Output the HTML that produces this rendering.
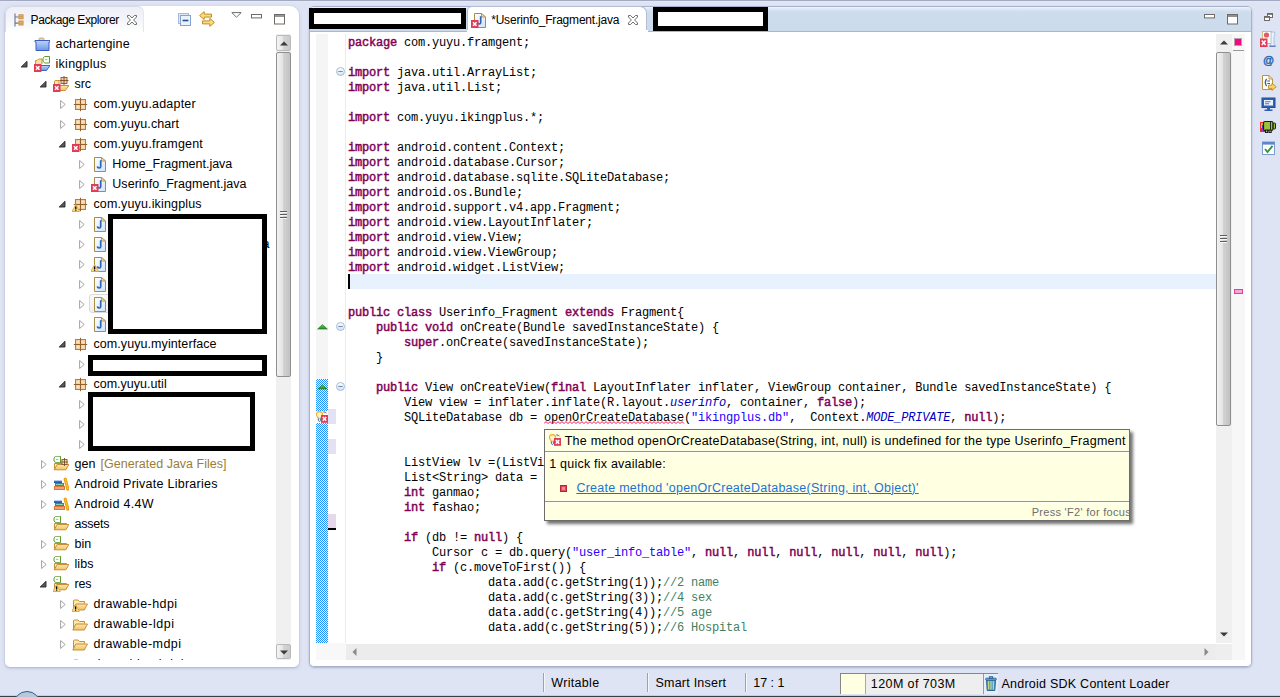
<!DOCTYPE html>
<html><head><meta charset="utf-8"><title>Eclipse</title>
<style>
html,body{margin:0;padding:0}
body{width:1280px;height:697px;overflow:hidden;position:relative;background:#dfe4f4;font-family:"Liberation Sans",sans-serif;font-size:12.5px;color:#000}
.abs{position:absolute}
.t{position:absolute;white-space:pre;line-height:18px;height:18px;margin-top:1px}
.topstrip{position:absolute;left:0;top:0;width:1280px;height:2px;background:linear-gradient(#a3a9be 0 50%,#e3e7f6 50%)}
.botstrip{position:absolute;left:0;top:695px;width:1280px;height:2px;background:linear-gradient(#c9cede 0 40%,#3a404a 50%)}
/* left panel */
#lp{position:absolute;left:5px;top:6px;width:294px;height:661px;background:#fff;border-radius:8px 9px 5px 5px;box-shadow:0 1px 3px rgba(110,120,165,.5)}
#lptab{position:absolute;left:0;top:0;width:139px;height:26px;border-radius:7px 7px 0 0;background:linear-gradient(#eef0f7,#f4f5fa 55%,#fff);box-shadow:inset 1px 1px 0 #d6dae8, inset -1px 0 0 #e4e6f0}
#tree{position:absolute;left:0;top:27px;width:271px;height:627px;overflow:hidden}
/* editor */
#ed{position:absolute;left:309px;top:6px;width:943px;height:661px;background:#fff;border-radius:5px;box-shadow:0 0 0 1px #a9b2cc inset, 0 1px 2px rgba(120,130,170,.5);overflow:hidden}
#edtabs{position:absolute;left:1px;top:0;width:941px;height:24px;background:linear-gradient(#eef4fc,#dde8f4 2px,#cddded 5px,#cbdbeb);border-radius:4px 4px 0 0}
.code{position:absolute;left:39px;white-space:pre;font-family:"Liberation Mono",monospace;font-size:12px;letter-spacing:-0.2px;line-height:15px;height:15px;color:#000}
.k{color:#7f0055;-webkit-text-stroke:0.45px #7f0055}
.s{color:#2a00ff}
.f{color:#0000c0;font-style:italic}
.c{color:#3f7f5f}
.blk{position:absolute;background:#fff;border:5px solid #000;box-sizing:border-box}
#edin{position:absolute;left:0;top:1px;width:943px;height:660px}

</style></head>
<body>
<svg width="0" height="0" style="position:absolute"><defs>
<linearGradient id="gBlue" x1="0" y1="0" x2="0" y2="1"><stop offset="0" stop-color="#bcd6fb"/><stop offset="1" stop-color="#6a97e6"/></linearGradient>
<linearGradient id="gFold" x1="0" y1="0" x2="0" y2="1"><stop offset="0" stop-color="#fbe7b0"/><stop offset="1" stop-color="#f0c266"/></linearGradient>
<linearGradient id="gPage" x1="0" y1="0" x2="1" y2="1"><stop offset="0" stop-color="#ffffff"/><stop offset="1" stop-color="#d3e2f6"/></linearGradient>
<linearGradient id="gCirc" x1="0" y1="0" x2="0" y2="1"><stop offset="0" stop-color="#ffffff"/><stop offset="1" stop-color="#d5e2f2"/></linearGradient>
<linearGradient id="gGreen" x1="0" y1="0" x2="0" y2="1"><stop offset="0" stop-color="#6cc86c"/><stop offset="1" stop-color="#1f8a1f"/></linearGradient>
<linearGradient id="gBtn" x1="0" y1="0" x2="1" y2="0"><stop offset="0" stop-color="#f4f4f4"/><stop offset=".45" stop-color="#e6e6e6"/><stop offset=".5" stop-color="#d4d4d4"/><stop offset="1" stop-color="#c4c4c6"/></linearGradient>
</defs><symbol id="prjc" viewBox="0 0 16 16"><rect x="5" y="2" width="5" height="3" rx="1" fill="#ecd2b0" stroke="#c89a6a" stroke-width=".8"/><path d="M1,4.5 H16 V6 H15 V14.5 H2 V6 H1 Z" fill="url(#gBlue)" stroke="#3c5cc4" stroke-linejoin="round"/></symbol><symbol id="prjo" viewBox="0 0 16 16"><path d="M1.5,11 V4.5 H3 L4.5,3 H8 V8" fill="#f8e0a0" stroke="#c89a48"/><path d="M3.5,9.5 H16 L12.5,14.5 H1 Z" fill="url(#gBlue)" stroke="#4462c6" stroke-linejoin="round"/><g transform="translate(7.5,-0.5)"><path d="M3.2,1 H8 V7.5 H3.4 L1.5,5.8 V2.6 Z" fill="#fff" stroke="#5c9c2c" stroke-width="1" stroke-linejoin="round"/><path d="M3.4,4.2 H5.8" stroke="#d8a860" stroke-width="1"/></g><rect x="0" y="8" width="7.5" height="8" fill="#e13c56"/><path d="M2,10.2 L5.5,13.8 M5.5,10.2 L2,13.8" stroke="#fff" stroke-width="1.5" fill="none"/></symbol><symbol id="srcerr" viewBox="0 0 16 16"><path d="M1.5,12 V5.5 Q1.5,4.5 3,4.5 H6 V9" fill="#fbe9b8" stroke="#c98f35"/><path d="M3.8,9.5 H16 L12.3,14.5 H0.8 Z" fill="url(#gFold)" stroke="#c98f35" stroke-linejoin="round"/><g transform="translate(-1,-1.5)"><rect x="9" y="3" width="6" height="6" fill="#f0d0a0" stroke="#8a5a2c" stroke-width=".9"/><path d="M12,1.5 V10.5 M7.5,6 H16.5" stroke="#7a4a22" stroke-width=".9"/></g><rect x="0" y="8" width="7.5" height="8" fill="#e13c56"/><path d="M2,10.2 L5.5,13.8 M5.5,10.2 L2,13.8" stroke="#fff" stroke-width="1.5" fill="none"/></symbol><symbol id="pkg" viewBox="0 0 16 16"><rect x="3.5" y="3.5" width="10" height="10" fill="#f0cf9c" stroke="#c17b2b"/><rect x="4.8" y="4.8" width="2.6" height="2.6" fill="#f7e2bc"/><rect x="9.6" y="4.8" width="2.6" height="2.6" fill="#f7e2bc"/><rect x="4.8" y="9.6" width="2.6" height="2.6" fill="#f7e2bc"/><rect x="9.6" y="9.6" width="2.6" height="2.6" fill="#f7e2bc"/><path d="M8.5,1.8 V15.2 M1.8,8.5 H15.2" stroke="#93602f" stroke-width="1"/></symbol><symbol id="pkgerr" viewBox="0 0 16 16"><rect x="3.5" y="3.5" width="10" height="10" fill="#f0cf9c" stroke="#c17b2b"/><rect x="4.8" y="4.8" width="2.6" height="2.6" fill="#f7e2bc"/><rect x="9.6" y="4.8" width="2.6" height="2.6" fill="#f7e2bc"/><rect x="4.8" y="9.6" width="2.6" height="2.6" fill="#f7e2bc"/><rect x="9.6" y="9.6" width="2.6" height="2.6" fill="#f7e2bc"/><path d="M8.5,1.8 V15.2 M1.8,8.5 H15.2" stroke="#93602f" stroke-width="1"/><rect x="0" y="8" width="7.5" height="8" fill="#e13c56"/><path d="M2,10.2 L5.5,13.8 M5.5,10.2 L2,13.8" stroke="#fff" stroke-width="1.5" fill="none"/></symbol><symbol id="pkgwarn" viewBox="0 0 16 16"><rect x="3.5" y="3.5" width="10" height="10" fill="#f0cf9c" stroke="#c17b2b"/><rect x="4.8" y="4.8" width="2.6" height="2.6" fill="#f7e2bc"/><rect x="9.6" y="4.8" width="2.6" height="2.6" fill="#f7e2bc"/><rect x="4.8" y="9.6" width="2.6" height="2.6" fill="#f7e2bc"/><rect x="9.6" y="9.6" width="2.6" height="2.6" fill="#f7e2bc"/><path d="M8.5,1.8 V15.2 M1.8,8.5 H15.2" stroke="#93602f" stroke-width="1"/><g transform="translate(0.2,0)"><path d="M3.6,8.4 L7.4,15.5 H-0.2 Z" fill="#fcdc88" stroke="#dfa63a" stroke-width=".9" stroke-linejoin="round"/><path d="M3.6,10.4 V13" stroke="#000" stroke-width="1.3"/><rect x="2.95" y="13.5" width="1.3" height="1.2" fill="#000"/></g></symbol><symbol id="jf" viewBox="0 0 16 16"><path d="M3.5,1.5 H10.5 L14.5,5 V15.5 H3.5 Z" fill="url(#gPage)" stroke="#a98c45" stroke-linejoin="round"/><path d="M10.5,1.5 V5 H14.5 Z" fill="#f3e4b8" stroke="#a98c45" stroke-width=".8" stroke-linejoin="round"/><path d="M9.7,5.2 V10.4 Q9.7,12 8.2,12 Q7.1,12 6.7,11.2" fill="none" stroke="#2c63b4" stroke-width="1.7" stroke-linecap="square"/></symbol><symbol id="jferr" viewBox="0 0 16 16"><path d="M3.5,1.5 H10.5 L14.5,5 V15.5 H3.5 Z" fill="url(#gPage)" stroke="#a98c45" stroke-linejoin="round"/><path d="M10.5,1.5 V5 H14.5 Z" fill="#f3e4b8" stroke="#a98c45" stroke-width=".8" stroke-linejoin="round"/><path d="M9.7,5.2 V10.4 Q9.7,12 8.2,12 Q7.1,12 6.7,11.2" fill="none" stroke="#2c63b4" stroke-width="1.7" stroke-linecap="square"/><rect x="0" y="8" width="7.5" height="8" fill="#e13c56"/><path d="M2,10.2 L5.5,13.8 M5.5,10.2 L2,13.8" stroke="#fff" stroke-width="1.5" fill="none"/></symbol><symbol id="jfwarn" viewBox="0 0 16 16"><path d="M3.5,1.5 H10.5 L14.5,5 V15.5 H3.5 Z" fill="url(#gPage)" stroke="#a98c45" stroke-linejoin="round"/><path d="M10.5,1.5 V5 H14.5 Z" fill="#f3e4b8" stroke="#a98c45" stroke-width=".8" stroke-linejoin="round"/><path d="M9.7,5.2 V10.4 Q9.7,12 8.2,12 Q7.1,12 6.7,11.2" fill="none" stroke="#2c63b4" stroke-width="1.7" stroke-linecap="square"/><path d="M3.6,8.4 L7.4,15.5 H-0.2 Z" fill="#fcdc88" stroke="#dfa63a" stroke-width=".9" stroke-linejoin="round"/><path d="M3.6,10.4 V13" stroke="#000" stroke-width="1.3"/><rect x="2.95" y="13.5" width="1.3" height="1.2" fill="#000"/></symbol><symbol id="gen" viewBox="0 0 16 16"><path d="M1.5,13.5 V7.5 H13.5 V8.5" fill="#fbe9b8" stroke="#c98f35"/><path d="M4.2,8.5 H15.8 L12.8,13.8 H1.2 Z" fill="url(#gFold)" stroke="#c98f35" stroke-linejoin="round"/><g transform="translate(-0.5,-0.8)"><path d="M3.2,1 H8 V7.5 H3.4 L1.5,5.8 V2.6 Z" fill="#fff" stroke="#5c9c2c" stroke-width="1" stroke-linejoin="round"/><path d="M3.4,4.2 H5.8" stroke="#d8a860" stroke-width="1"/></g><g transform="translate(-1,0.5)"><rect x="10" y="3" width="5" height="5" fill="#f4e2b4" stroke="#8a5a2c" stroke-width=".9"/><path d="M12.5,1.5 V9.5 M8.5,5.5 H16" stroke="#7a4a22" stroke-width=".9"/></g></symbol><symbol id="fldd" viewBox="0 0 16 16"><path d="M1.5,13.5 V7.5 H13.5 V8.5" fill="#fbe9b8" stroke="#c98f35"/><path d="M4.2,8.5 H15.8 L12.8,13.8 H1.2 Z" fill="url(#gFold)" stroke="#c98f35" stroke-linejoin="round"/><g transform="translate(-0.5,-0.8)"><path d="M3.2,1 H8 V7.5 H3.4 L1.5,5.8 V2.6 Z" fill="#fff" stroke="#5c9c2c" stroke-width="1" stroke-linejoin="round"/><path d="M3.4,4.2 H5.8" stroke="#d8a860" stroke-width="1"/></g></symbol><symbol id="flddwarn" viewBox="0 0 16 16"><path d="M1.5,13.5 V7.5 H13.5 V8.5" fill="#fbe9b8" stroke="#c98f35"/><path d="M4.2,8.5 H15.8 L12.8,13.8 H1.2 Z" fill="url(#gFold)" stroke="#c98f35" stroke-linejoin="round"/><g transform="translate(-0.5,-0.8)"><path d="M3.2,1 H8 V7.5 H3.4 L1.5,5.8 V2.6 Z" fill="#fff" stroke="#5c9c2c" stroke-width="1" stroke-linejoin="round"/><path d="M3.4,4.2 H5.8" stroke="#d8a860" stroke-width="1"/></g><path d="M3.6,8.4 L7.4,15.5 H-0.2 Z" fill="#fcdc88" stroke="#dfa63a" stroke-width=".9" stroke-linejoin="round"/><path d="M3.6,10.4 V13" stroke="#000" stroke-width="1.3"/><rect x="2.95" y="13.5" width="1.3" height="1.2" fill="#000"/></symbol><symbol id="fld" viewBox="0 0 16 16"><g transform="translate(0,.5)"><path d="M1.5,12.5 V4.5 Q1.5,3.5 2.5,3.5 H6 L7.5,5 H12.5 V7" fill="#fbe9b8" stroke="#c98f35"/><path d="M3.8,7.5 H15.5 L12.3,13.5 H0.8 Z" fill="url(#gFold)" stroke="#c98f35" stroke-linejoin="round"/></g></symbol><symbol id="fldwarn" viewBox="0 0 16 16"><g transform="translate(0,.5)"><path d="M1.5,12.5 V4.5 Q1.5,3.5 2.5,3.5 H6 L7.5,5 H12.5 V7" fill="#fbe9b8" stroke="#c98f35"/><path d="M3.8,7.5 H15.5 L12.3,13.5 H0.8 Z" fill="url(#gFold)" stroke="#c98f35" stroke-linejoin="round"/></g><path d="M3.6,8.4 L7.4,15.5 H-0.2 Z" fill="#fcdc88" stroke="#dfa63a" stroke-width=".9" stroke-linejoin="round"/><path d="M3.6,10.4 V13" stroke="#000" stroke-width="1.3"/><rect x="2.95" y="13.5" width="1.3" height="1.2" fill="#000"/></symbol><symbol id="lib" viewBox="0 0 16 16"><rect x="1" y="4.8" width="8" height="2.2" fill="#1f5cb4"/><rect x="1" y="4.8" width="8" height=".8" fill="#4a86d8"/><rect x="2" y="7" width="9" height="3" fill="#2b9a62"/><rect x="3" y="8" width="7" height="1" fill="#8fd0a8"/><rect x="1" y="10" width="11" height="4" fill="#d8763c"/><rect x="2" y="11" width="9" height="2" fill="#e9a478"/><path d="M12.2,3.2 L14.8,13" stroke="#e9a00c" stroke-width="3.2" stroke-linecap="round"/><path d="M12.3,3.4 L14.7,12.6" stroke="#f8c838" stroke-width="1.2" stroke-linecap="round" stroke-dasharray="1.6 1.2"/></symbol><symbol id="arc" viewBox="0 0 6 9"><path d="M0.6,0.5 V8.5 L5.2,4.5 Z" fill="#fff" stroke="#a3a3a3" stroke-width="1" stroke-linejoin="round"/></symbol><symbol id="aro" viewBox="0 0 7 7"><path d="M6,0.3 V6 H0.2 Z" fill="#595959" stroke="#262626" stroke-width=".9" stroke-linejoin="round"/></symbol><symbol id="pkgexp" viewBox="0 0 16 16"><path d="M5,2.6 V15.4 M5,6 H8.5 M5,12.1 H8.5" stroke="#68748c" stroke-width="1.1" fill="none"/><rect x="8.5" y="3.4" width="5" height="4.8" fill="#c47a2c"/><rect x="9.5" y="4.3" width="1.2" height="1.2" fill="#fbe6b0"/><rect x="11.4" y="4.3" width="1.2" height="1.2" fill="#fbe6b0"/><rect x="9.5" y="6.199999999999999" width="1.2" height="1.2" fill="#fbe6b0"/><rect x="11.4" y="6.199999999999999" width="1.2" height="1.2" fill="#fbe6b0"/><rect x="8.5" y="9.6" width="5" height="4.8" fill="#c47a2c"/><rect x="9.5" y="10.5" width="1.2" height="1.2" fill="#fbe6b0"/><rect x="11.4" y="10.5" width="1.2" height="1.2" fill="#fbe6b0"/><rect x="9.5" y="12.399999999999999" width="1.2" height="1.2" fill="#fbe6b0"/><rect x="11.4" y="12.399999999999999" width="1.2" height="1.2" fill="#fbe6b0"/></symbol><symbol id="closex" viewBox="0 0 12 12"><path d="M1.5,1.5 L3.6,1.5 L6,4 L8.4,1.5 L10.5,1.5 L10.5,3 L7.6,6 L10.5,9 L10.5,10.5 L8.4,10.5 L6,8 L3.6,10.5 L1.5,10.5 L1.5,9 L4.4,6 L1.5,3 Z" fill="#fff" stroke="#6f6f6f" stroke-width="1" stroke-linejoin="round"/></symbol><symbol id="collapse" viewBox="0 0 13 13"><rect x="0.5" y="0.5" width="10" height="10" fill="#dde8f7" stroke="#a6bbdb"/><rect x="2.5" y="2.5" width="10" height="10" fill="#eaf2fc" stroke="#86a2cc"/><path d="M4.6,7.5 H10.4" stroke="#1f4ea0" stroke-width="1.6"/></symbol><symbol id="linked" viewBox="0 0 16 16"><path d="M0.6,4.6 L5.2,0.6 V3.1 H12.5 V6.1 H5.2 V8.6 Z" fill="#f9dc80" stroke="#c48c24" stroke-linejoin="round"/><path d="M15.4,11.4 L10.8,7.4 V9.9 H3.5 V12.9 H10.8 V15.4 Z" fill="#f9dc80" stroke="#c48c24" stroke-linejoin="round"/></symbol><symbol id="vmenu" viewBox="0 0 11 6"><path d="M0.8,0.6 H10.2 L5.5,5.2 Z" fill="#fff" stroke="#6e6e6e" stroke-linejoin="round"/></symbol><symbol id="minb" viewBox="0 0 11 5"><rect x="0.5" y="0.5" width="10" height="3.4" fill="#fff" stroke="#6e6a68"/></symbol><symbol id="maxb" viewBox="0 0 11 11"><rect x="0.5" y="0.5" width="10" height="9.5" fill="#fff" stroke="#6e6a68"/><path d="M0.5,2 H10.5" stroke="#6e6a68" stroke-width="1.4"/></symbol><symbol id="foldm" viewBox="0 0 9 9"><circle cx="4.5" cy="4.5" r="4" fill="url(#gCirc)" stroke="#a9bcd4"/><path d="M2.3,4.5 H6.7" stroke="#6f8db8" stroke-width="1.1"/></symbol><symbol id="ovr" viewBox="0 0 11 6"><path d="M5.5,0.5 L10.4,5.1 H0.6 Z" fill="url(#gGreen)" stroke="#1c7a1c" stroke-width=".6" stroke-linejoin="round"/></symbol><symbol id="bulberr" viewBox="0 0 12 12"><path d="M3.5,0.6 Q6.6,0.6 6.6,3.4 Q6.6,4.6 5.4,5.8 L4.6,7.4 H2.4 L1.6,5.8 Q0.4,4.6 0.4,3.4 Q0.4,0.6 3.5,0.6 Z" fill="#fdf3c4" stroke="#eeaa32" stroke-width="1.1"/><path d="M2.3,7.4 V9.6 Q3.5,11.6 4.7,9.6 V7.4" fill="#dfe8f4" stroke="#3c68ac" stroke-width="1"/><path d="M7.2,0.9 Q9.6,0.4 10.6,2.4 M8.6,2.2 L9.3,1.2" stroke="#555" stroke-width=".8" fill="none"/><rect x="5" y="4" width="7" height="7.8" fill="#e13c56"/><path d="M6.8,6 L10.2,9.8 M10.2,6 L6.8,9.8" stroke="#fff" stroke-width="1.5"/></symbol><symbol id="sqred" viewBox="0 0 7 7"><rect x="0.5" y="0.5" width="6" height="6" fill="#e0475c" stroke="#b5283e"/><rect x="2" y="2" width="3" height="3" fill="#ef8a98"/></symbol><symbol id="restore" viewBox="0 0 9 8"><rect x="3.5" y="0.5" width="5" height="4" fill="#fff" stroke="#6e6a68"/><path d="M3.5,1.2 H8.5" stroke="#6e6a68" stroke-width="1.3"/><rect x="0.5" y="3.5" width="5" height="4" fill="#fff" stroke="#6e6a68"/><path d="M0.5,4.2 H5.5" stroke="#6e6a68" stroke-width="1.3"/></symbol><symbol id="probs" viewBox="0 0 16 16"><rect x="2.5" y="0.5" width="9" height="12" fill="#fdfdf8" stroke="#c8b27a" stroke-width=".8"/><circle cx="6.5" cy="4" r="2.6" fill="#e65a62"/><path d="M11,1 H14.5 Q15.5,4 14,6 V13 Q15,14 15.5,15 H9.5 Q10.5,14 11,13 Z" fill="#e8f4fa" stroke="#9ab6d4" stroke-width=".8"/><path d="M9.5,15.2 H15.5" stroke="#3a5aa8" stroke-width="1"/><rect x="0" y="7.5" width="7.5" height="8.5" fill="#e13c56"/><path d="M1.8,9.6 L5.6,14 M5.6,9.6 L1.8,14" stroke="#fff" stroke-width="1.6"/></symbol><symbol id="decl" viewBox="0 0 16 16"><path d="M1.5,0.5 H8 L11.5,4 V14.5 H1.5 Z" fill="#fffdf4" stroke="#b89648" stroke-linejoin="round"/><path d="M8,0.5 V4 H11.5" fill="none" stroke="#b89648"/><path d="M5.6,4 Q3,7.5 5.6,11" fill="none" stroke="#2b5fb0" stroke-width="1.3"/><path d="M6.3,6 H9 M6.3,8.5 H9" stroke="#2b5fb0" stroke-width="1.1"/><path d="M7.5,10.2 H11 V8.2 L15.2,11.8 L11,15.4 V13.4 H7.5 Z" fill="#f8d668" stroke="#c28a22" stroke-width=".9" stroke-linejoin="round"/></symbol><symbol id="cons" viewBox="0 0 16 16"><rect x="1" y="1" width="13" height="9.5" fill="#2f62b4" stroke="#224c94"/><rect x="3" y="3" width="9" height="5.5" fill="#eaf2fc"/><path d="M4,4.7 H9.5 M4,6.8 H8" stroke="#4a76c0" stroke-width="1.1"/><path d="M6,10.5 H9 V12.5 H11.5 V14 H3.5 V12.5 H6 Z" fill="#2f62b4"/></symbol><symbol id="andr" viewBox="0 0 16 13"><path d="M0,2 H3 V12 H0 Z" fill="#e83030"/><path d="M1,3 V12 H4 V3Z" fill="#f0c020"/><path d="M2,5 V12 H5 V5Z" fill="#3050e0"/><path d="M1,8 V12 H4 V8Z" fill="#a030c0"/><rect x="3.5" y="1.5" width="9.5" height="9" rx="1.5" fill="#9ac33a" stroke="#1a1a1a" stroke-width="1.2"/><rect x="13.2" y="3" width="2.3" height="6" rx="1" fill="#9ac33a" stroke="#1a1a1a" stroke-width="1"/><rect x="5.5" y="10" width="2.2" height="2.6" fill="#9ac33a" stroke="#1a1a1a" stroke-width="1"/><rect x="9" y="10" width="2.2" height="2.6" fill="#9ac33a" stroke="#1a1a1a" stroke-width="1"/><path d="M10.5,2 V10" stroke="#1a1a1a" stroke-width=".9"/></symbol><symbol id="tasks" viewBox="0 0 15 15"><rect x="1.5" y="1" width="12" height="12.5" fill="#fdfefe" stroke="#7f9ccc"/><rect x="1.5" y="1" width="12" height="2.6" fill="#5a86cc"/><path d="M4,8 L6.5,11 L11.5,4.8" fill="none" stroke="#2c9a3c" stroke-width="1.9"/></symbol><symbol id="trash" viewBox="0 0 12 15"><path d="M1.5,4 H10.5 L9.8,14.5 H2.2 Z" fill="#4f9cc0" stroke="#2a6a9a" stroke-linejoin="round"/><path d="M3.6,5 V13.5 M6,5 V13.5 M8.4,5 V13.5" stroke="#c4d88a" stroke-width="1.2"/><rect x="0.7" y="2.2" width="10.6" height="2" rx=".8" fill="#6cb4d4" stroke="#2a5a94" stroke-width=".9"/><rect x="4.3" y="0.7" width="3.4" height="1.6" fill="#6cb4d4" stroke="#2a5a94" stroke-width=".8"/></symbol><symbol id="sup" viewBox="0 0 8 5"><path d="M0,4.5 L4,0.5 L8,4.5 Z" fill="#3c3c3c"/></symbol><symbol id="sdn" viewBox="0 0 8 5"><path d="M0,0.5 L4,4.5 L8,0.5 Z" fill="#3c3c3c"/></symbol><symbol id="slf" viewBox="0 0 5 8"><path d="M4.5,0 L0.5,4 L4.5,8 Z" fill="#8a8a8a"/></symbol><symbol id="srt" viewBox="0 0 5 8"><path d="M0.5,0 L4.5,4 L0.5,8 Z" fill="#8a8a8a"/></symbol></svg>
<div class="topstrip"></div>
<div id="lp"><div id="lptab"></div></div>
<svg class="abs" style="left:9.5px;top:10.5px" width="16" height="16"><use href="#pkgexp"/></svg>
<div class="t" style="left:30.6px;top:10px;font-size:12px;letter-spacing:-0.411px;">Package Explorer</div>
<svg class="abs" style="left:126px;top:14px" width="12" height="12"><use href="#closex"/></svg>
<svg class="abs" style="left:178px;top:13px" width="13" height="13"><use href="#collapse"/></svg>
<svg class="abs" style="left:199px;top:11px" width="16" height="16"><use href="#linked"/></svg>
<svg class="abs" style="left:230.5px;top:11.5px" width="11" height="6"><use href="#vmenu"/></svg>
<svg class="abs" style="left:250.5px;top:13.5px" width="11" height="5"><use href="#minb"/></svg>
<svg class="abs" style="left:273.5px;top:13.5px" width="11" height="11"><use href="#maxb"/></svg>
<div class="abs" style="left:276px;top:34px;width:15px;height:626px;background:#f0f0f0"></div>
<div class="abs" style="left:276px;top:35px;width:15px;height:16px;border:1px solid #b9b9b9;border-radius:2px;box-sizing:border-box;background:linear-gradient(90deg,#f4f4f4,#e6e6e6 45%,#d4d4d4 50%,#cacaca)"></div>
<svg class="abs" style="left:279.5px;top:40.5px" width="8" height="5"><use href="#sup"/></svg>
<div class="abs" style="left:276px;top:52px;width:15px;height:325px;border:1px solid #8f8f8f;border-radius:2px;box-sizing:border-box;background:linear-gradient(90deg,#f2f2f2,#e4e4e4 45%,#d2d2d2 50%,#c2c2c4)"></div>
<div class="abs" style="left:280px;top:211px;width:7px;height:8px;background:repeating-linear-gradient(#5e5e5e 0 1px,#f6f6f6 1px 2px,transparent 2px 3px)"></div>
<div class="abs" style="left:276px;top:644px;width:15px;height:15px;border:1px solid #b9b9b9;border-radius:2px;box-sizing:border-box;background:linear-gradient(90deg,#f4f4f4,#e6e6e6 45%,#d4d4d4 50%,#cacaca)"></div>
<svg class="abs" style="left:279.5px;top:649.5px" width="8" height="5"><use href="#sdn"/></svg>
<div class="abs" style="left:0;top:0;width:276px;height:660px;overflow:hidden">
<div class="abs" style="left:89px;top:294px;width:170px;height:19px;border:1px solid #dadada;border-radius:3px;background:linear-gradient(#fafafa,#efefef);box-sizing:border-box"></div>
<svg class="abs" style="left:34px;top:36px" width="16" height="16"><use href="#prjc"/></svg>
<div class="t" style="left:55.6px;top:34px;letter-spacing:0.156px">achartengine</div>
<svg class="abs" style="left:20.6px;top:60.6px" width="7" height="7"><use href="#aro"/></svg>
<svg class="abs" style="left:34px;top:56px" width="16" height="16"><use href="#prjo"/></svg>
<div class="t" style="left:55.6px;top:54px;letter-spacing:0.251px">ikingplus</div>
<svg class="abs" style="left:39.6px;top:80.6px" width="7" height="7"><use href="#aro"/></svg>
<svg class="abs" style="left:53px;top:76px" width="16" height="16"><use href="#srcerr"/></svg>
<div class="t" style="left:74.5px;top:74px;letter-spacing:-0.124px">src</div>
<svg class="abs" style="left:60.1px;top:100.2px" width="6" height="9"><use href="#arc"/></svg>
<svg class="abs" style="left:72px;top:96px" width="16" height="16"><use href="#pkg"/></svg>
<div class="t" style="left:93.4px;top:94px;letter-spacing:0.19px">com.yuyu.adapter</div>
<svg class="abs" style="left:60.1px;top:120.2px" width="6" height="9"><use href="#arc"/></svg>
<svg class="abs" style="left:72px;top:116px" width="16" height="16"><use href="#pkg"/></svg>
<div class="t" style="left:93.4px;top:114px;letter-spacing:0.06px">com.yuyu.chart</div>
<svg class="abs" style="left:58.6px;top:140.6px" width="7" height="7"><use href="#aro"/></svg>
<svg class="abs" style="left:72px;top:136px" width="16" height="16"><use href="#pkgerr"/></svg>
<div class="t" style="left:93.4px;top:134px;letter-spacing:0.194px">com.yuyu.framgent</div>
<svg class="abs" style="left:79.1px;top:160.2px" width="6" height="9"><use href="#arc"/></svg>
<svg class="abs" style="left:91px;top:156px" width="16" height="16"><use href="#jf"/></svg>
<div class="t" style="left:112.3px;top:154px;letter-spacing:-0.011px">Home_Fragment.java</div>
<svg class="abs" style="left:79.1px;top:180.2px" width="6" height="9"><use href="#arc"/></svg>
<svg class="abs" style="left:91px;top:176px" width="16" height="16"><use href="#jferr"/></svg>
<div class="t" style="left:112.3px;top:174px;letter-spacing:0.041px">Userinfo_Fragment.java</div>
<svg class="abs" style="left:58.6px;top:200.6px" width="7" height="7"><use href="#aro"/></svg>
<svg class="abs" style="left:72px;top:196px" width="16" height="16"><use href="#pkgwarn"/></svg>
<div class="t" style="left:93.4px;top:194px;letter-spacing:0.149px">com.yuyu.ikingplus</div>
<svg class="abs" style="left:79.1px;top:220.2px" width="6" height="9"><use href="#arc"/></svg>
<svg class="abs" style="left:91px;top:216px" width="16" height="16"><use href="#jf"/></svg>
<svg class="abs" style="left:79.1px;top:240.2px" width="6" height="9"><use href="#arc"/></svg>
<svg class="abs" style="left:91px;top:236px" width="16" height="16"><use href="#jf"/></svg>
<svg class="abs" style="left:79.1px;top:260.2px" width="6" height="9"><use href="#arc"/></svg>
<svg class="abs" style="left:91px;top:256px" width="16" height="16"><use href="#jfwarn"/></svg>
<svg class="abs" style="left:79.1px;top:280.2px" width="6" height="9"><use href="#arc"/></svg>
<svg class="abs" style="left:91px;top:276px" width="16" height="16"><use href="#jf"/></svg>
<svg class="abs" style="left:79.1px;top:300.2px" width="6" height="9"><use href="#arc"/></svg>
<svg class="abs" style="left:91px;top:296px" width="16" height="16"><use href="#jf"/></svg>
<svg class="abs" style="left:79.1px;top:320.2px" width="6" height="9"><use href="#arc"/></svg>
<svg class="abs" style="left:91px;top:316px" width="16" height="16"><use href="#jf"/></svg>
<svg class="abs" style="left:58.6px;top:340.6px" width="7" height="7"><use href="#aro"/></svg>
<svg class="abs" style="left:72px;top:336px" width="16" height="16"><use href="#pkg"/></svg>
<div class="t" style="left:93.4px;top:334px;letter-spacing:0.081px">com.yuyu.myinterface</div>
<svg class="abs" style="left:79.1px;top:360.2px" width="6" height="9"><use href="#arc"/></svg>
<svg class="abs" style="left:58.6px;top:380.6px" width="7" height="7"><use href="#aro"/></svg>
<svg class="abs" style="left:72px;top:376px" width="16" height="16"><use href="#pkg"/></svg>
<div class="t" style="left:93.4px;top:374px;letter-spacing:0.027px">com.yuyu.util</div>
<svg class="abs" style="left:79.1px;top:400.2px" width="6" height="9"><use href="#arc"/></svg>
<svg class="abs" style="left:79.1px;top:420.2px" width="6" height="9"><use href="#arc"/></svg>
<svg class="abs" style="left:79.1px;top:440.2px" width="6" height="9"><use href="#arc"/></svg>
<svg class="abs" style="left:41.1px;top:460.2px" width="6" height="9"><use href="#arc"/></svg>
<svg class="abs" style="left:53px;top:456px" width="16" height="16"><use href="#gen"/></svg>
<div class="t" style="left:74.5px;top:454px;letter-spacing:0.08px">gen</div>
<div class="t" style="left:100.6px;top:454px;letter-spacing:0.002px;color:#9a7d3a">[Generated Java Files]</div>
<svg class="abs" style="left:41.1px;top:480.2px" width="6" height="9"><use href="#arc"/></svg>
<svg class="abs" style="left:53px;top:476px" width="16" height="16"><use href="#lib"/></svg>
<div class="t" style="left:74.5px;top:474px;letter-spacing:0.253px">Android Private Libraries</div>
<svg class="abs" style="left:41.1px;top:500.2px" width="6" height="9"><use href="#arc"/></svg>
<svg class="abs" style="left:53px;top:496px" width="16" height="16"><use href="#lib"/></svg>
<div class="t" style="left:74.5px;top:494px;letter-spacing:0.297px">Android 4.4W</div>
<svg class="abs" style="left:53px;top:516px" width="16" height="16"><use href="#fldd"/></svg>
<div class="t" style="left:74.5px;top:514px;letter-spacing:-0.207px">assets</div>
<svg class="abs" style="left:41.1px;top:540.2px" width="6" height="9"><use href="#arc"/></svg>
<svg class="abs" style="left:53px;top:536px" width="16" height="16"><use href="#fldd"/></svg>
<div class="t" style="left:74.5px;top:534px;letter-spacing:0.071px">bin</div>
<svg class="abs" style="left:41.1px;top:560.2px" width="6" height="9"><use href="#arc"/></svg>
<svg class="abs" style="left:53px;top:556px" width="16" height="16"><use href="#fldd"/></svg>
<div class="t" style="left:74.5px;top:554px;letter-spacing:0.084px">libs</div>
<svg class="abs" style="left:39.6px;top:580.6px" width="7" height="7"><use href="#aro"/></svg>
<svg class="abs" style="left:53px;top:576px" width="16" height="16"><use href="#flddwarn"/></svg>
<div class="t" style="left:74.5px;top:574px;letter-spacing:-0.158px">res</div>
<svg class="abs" style="left:60.1px;top:600.2px" width="6" height="9"><use href="#arc"/></svg>
<svg class="abs" style="left:72px;top:596px" width="16" height="16"><use href="#fldwarn"/></svg>
<div class="t" style="left:93.4px;top:594px;letter-spacing:0.436px">drawable-hdpi</div>
<svg class="abs" style="left:60.1px;top:620.2px" width="6" height="9"><use href="#arc"/></svg>
<svg class="abs" style="left:72px;top:616px" width="16" height="16"><use href="#fld"/></svg>
<div class="t" style="left:93.4px;top:614px;letter-spacing:0.519px">drawable-ldpi</div>
<svg class="abs" style="left:60.1px;top:640.2px" width="6" height="9"><use href="#arc"/></svg>
<svg class="abs" style="left:72px;top:636px" width="16" height="16"><use href="#fld"/></svg>
<div class="t" style="left:93.4px;top:634px;letter-spacing:0.47px">drawable-mdpi</div>
<svg class="abs" style="left:60.1px;top:660.2px" width="6" height="9"><use href="#arc"/></svg>
<svg class="abs" style="left:72px;top:656px" width="16" height="16"><use href="#fld"/></svg>
<div class="t" style="left:93.4px;top:654px;letter-spacing:0.416px">drawable-xhdpi</div>
<div class="t" style="left:262.5px;top:234px;color:#000">a</div>
<div class="blk" style="left:108px;top:214px;width:159px;height:120px"></div>
<div class="blk" style="left:88px;top:355px;width:179px;height:21px"></div>
<div class="blk" style="left:88px;top:392px;width:167px;height:59px"></div>
</div>
<div id="ed"><div id="edin">
<div id="edtabs"></div>
<div class="abs" style="left:1px;top:24px;width:941px;height:1px;background:#a9b7d0"></div>
<div class="abs" style="left:159px;top:0;width:178px;height:25px;background:#fff;border-radius:4px 6px 0 0;box-shadow:0 0 0 1px #b4bdd3"></div>
<div class="abs" style="left:158px;top:23px;width:181px;height:3px;background:#fff"></div>
<svg class="abs" style="left:162px;top:5px" width="16" height="16"><use href="#jferr"/></svg>
<div class="t" style="left:182.2px;top:3px;font-size:12px;letter-spacing:-0.2px">*Userinfo_Fragment.java</div>
<svg class="abs" style="left:318px;top:7px" width="12" height="12"><use href="#closex"/></svg>
<svg class="abs" style="left:895px;top:7px" width="11" height="5"><use href="#minb"/></svg>
<svg class="abs" style="left:918px;top:7px" width="11" height="11"><use href="#maxb"/></svg>
<div class="abs" style="left:7px;top:27px;width:12px;height:626px;background:#f5f5f5"></div>
<div class="abs" style="left:36px;top:27px;width:1px;height:610px;background:#ececec"></div>
<div class="abs" style="left:7px;top:372px;width:12px;height:264px;background:conic-gradient(#1e90ff 25%,#fff 0 50%,#1e90ff 0 75%,#fff 0) 0 0/2px 2px"></div>
<div class="abs" style="left:19px;top:402px;width:8px;height:15px;background:#e2e2f2"></div>
<div class="abs" style="left:19px;top:432px;width:8px;height:15px;background:#e2e2f2"></div>
<div class="abs" style="left:19px;top:507px;width:8px;height:14px;background:#e6d8ea"></div>
<div class="abs" style="left:19px;top:521px;width:8px;height:2px;background:#000"></div>
<div class="abs" style="left:39px;top:267px;width:868px;height:15px;background:#e8f2fe"></div>
<div class="abs" style="left:39px;top:267px;width:2px;height:15px;background:#000"></div>
<div class="code" style="top:29.3px"><span class="k">package</span> com.yuyu.framgent;</div>
<div class="code" style="top:59.3px"><span class="k">import</span> java.util.ArrayList;</div>
<div class="code" style="top:74.3px"><span class="k">import</span> java.util.List;</div>
<div class="code" style="top:104.3px"><span class="k">import</span> com.yuyu.ikingplus.*;</div>
<div class="code" style="top:134.3px"><span class="k">import</span> android.content.Context;</div>
<div class="code" style="top:149.3px"><span class="k">import</span> android.database.Cursor;</div>
<div class="code" style="top:164.3px"><span class="k">import</span> android.database.sqlite.SQLiteDatabase;</div>
<div class="code" style="top:179.3px"><span class="k">import</span> android.os.Bundle;</div>
<div class="code" style="top:194.3px"><span class="k">import</span> android.support.v4.app.Fragment;</div>
<div class="code" style="top:209.3px"><span class="k">import</span> android.view.LayoutInflater;</div>
<div class="code" style="top:224.3px"><span class="k">import</span> android.view.View;</div>
<div class="code" style="top:239.3px"><span class="k">import</span> android.view.ViewGroup;</div>
<div class="code" style="top:254.3px"><span class="k">import</span> android.widget.ListView;</div>
<div class="code" style="top:299.3px"><span class="k">public</span> <span class="k">class</span> Userinfo_Fragment <span class="k">extends</span> Fragment{</div>
<div class="code" style="top:314.3px">    <span class="k">public</span> <span class="k">void</span> onCreate(Bundle savedInstanceState) {</div>
<div class="code" style="top:329.3px">        <span class="k">super</span>.onCreate(savedInstanceState);</div>
<div class="code" style="top:344.3px">    }</div>
<div class="code" style="top:374.3px">    <span class="k">public</span> View onCreateView(<span class="k">final</span> LayoutInflater inflater, ViewGroup container, Bundle savedInstanceState) {</div>
<div class="code" style="top:389.3px">        View view = inflater.inflate(R.layout.<span class="f">userinfo</span>, container, <span class="k">false</span>);</div>
<div class="code" style="top:404.3px">        SQLiteDatabase db = <span class="sq">openOrCreateDatabase</span>(<span class="s">"ikingplus.db"</span>,  Context.<span class="f">MODE_PRIVATE</span>, <span class="k">null</span>);</div>
<div class="code" style="top:449.3px">        ListView lv =(ListView) view.findViewById(R.id.</div>
<div class="code" style="top:464.3px">        List&lt;String&gt; data = <span class="k">new</span> ArrayList&lt;String&gt;();</div>
<div class="code" style="top:479.3px">        <span class="k">int</span> ganmao;</div>
<div class="code" style="top:494.3px">        <span class="k">int</span> fashao;</div>
<div class="code" style="top:524.3px">        <span class="k">if</span> (db != <span class="k">null</span>) {</div>
<div class="code" style="top:539.3px">            Cursor c = db.query(<span class="s">"user_info_table"</span>, <span class="k">null</span>, <span class="k">null</span>, <span class="k">null</span>, <span class="k">null</span>, <span class="k">null</span>, <span class="k">null</span>);</div>
<div class="code" style="top:554.3px">            <span class="k">if</span> (c.moveToFirst()) {</div>
<div class="code" style="top:569.3px">                    data.add(c.getString(1));<span class="c">//2 name</span></div>
<div class="code" style="top:584.3px">                    data.add(c.getString(3));<span class="c">//4 sex</span></div>
<div class="code" style="top:599.3px">                    data.add(c.getString(4));<span class="c">//5 age</span></div>
<div class="code" style="top:614.3px">                    data.add(c.getString(5));<span class="c">//6 Hospital</span></div>
<svg class="abs" style="left:235px;top:414px" width="141" height="4"><polyline points="0,2.6 2,0.6 4,2.6 6,0.6 8,2.6 10,0.6 12,2.6 14,0.6 16,2.6 18,0.6 20,2.6 22,0.6 24,2.6 26,0.6 28,2.6 30,0.6 32,2.6 34,0.6 36,2.6 38,0.6 40,2.6 42,0.6 44,2.6 46,0.6 48,2.6 50,0.6 52,2.6 54,0.6 56,2.6 58,0.6 60,2.6 62,0.6 64,2.6 66,0.6 68,2.6 70,0.6 72,2.6 74,0.6 76,2.6 78,0.6 80,2.6 82,0.6 84,2.6 86,0.6 88,2.6 90,0.6 92,2.6 94,0.6 96,2.6 98,0.6 100,2.6 102,0.6 104,2.6 106,0.6 108,2.6 110,0.6 112,2.6 114,0.6 116,2.6 118,0.6 120,2.6 122,0.6 124,2.6 126,0.6 128,2.6 130,0.6 132,2.6 134,0.6 136,2.6 138,0.6 140,2.6" fill="none" stroke="#f0145a" stroke-width="1"/></svg>
<svg class="abs" style="left:27px;top:60px" width="9" height="9"><use href="#foldm"/></svg>
<svg class="abs" style="left:27px;top:315px" width="9" height="9"><use href="#foldm"/></svg>
<svg class="abs" style="left:27px;top:375px" width="9" height="9"><use href="#foldm"/></svg>
<svg class="abs" style="left:7.5px;top:316.5px" width="11" height="6"><use href="#ovr"/></svg>
<svg class="abs" style="left:7.5px;top:376.5px" width="11" height="6"><use href="#ovr"/></svg>
<div class="abs" style="left:7px;top:403.5px;width:12px;height:12px;background:#fff"></div>
<svg class="abs" style="left:7px;top:404px" width="12" height="12"><use href="#bulberr"/></svg>
<div class="abs" style="left:907px;top:27px;width:16px;height:609px;background:#f0f0f0"></div>
<svg class="abs" style="left:911px;top:33px" width="8" height="5"><use href="#sup"/></svg>
<svg class="abs" style="left:911px;top:625px" width="8" height="5"><use href="#sdn"/></svg>
<div class="abs" style="left:907px;top:45px;width:15px;height:374px;border:1px solid #8f8f8f;border-radius:2px;box-sizing:border-box;background:linear-gradient(90deg,#f2f2f2,#e4e4e4 45%,#d2d2d2 50%,#c2c2c4)"></div>
<div class="abs" style="left:911px;top:228px;width:7px;height:8px;background:repeating-linear-gradient(#5e5e5e 0 1px,#f6f6f6 1px 2px,transparent 2px 3px)"></div>
<div class="abs" style="left:923px;top:27px;width:13px;height:626px;background:#f7f7f7"></div>
<div class="abs" style="left:925px;top:31px;width:8px;height:8px;background:#f5087f;box-shadow:0 0 0 1px #b8a0b0 inset"></div>
<div class="abs" style="left:924px;top:42.5px;width:11px;height:1px;background:#9a9a9a"></div>
<div class="abs" style="left:925px;top:282px;width:9px;height:5px;box-sizing:border-box;border:1px solid #e0409c;background:#f8a8d4"></div>
<div class="abs" style="left:37px;top:637px;width:870px;height:16px;background:#ececec"></div>
<div class="abs" style="left:7px;top:636px;width:30px;height:17px;background:#f8f8f8"></div>
<div class="abs" style="left:906px;top:637px;width:17px;height:16px;background:#eeeeee"></div>
<svg class="abs" style="left:43px;top:641px" width="5" height="8"><use href="#slf"/></svg>
<svg class="abs" style="left:895px;top:641px" width="5" height="8"><use href="#srt"/></svg>
</div></div>
<div class="blk" style="left:309px;top:8px;width:157px;height:21px"></div>
<div class="blk" style="left:653px;top:7px;width:115px;height:24px"></div>
<div class="abs" style="left:544px;top:429px;width:586px;height:92px;box-sizing:border-box;border:1px solid #6c6c6c;background:#ffffe1;box-shadow:3px 3px 3px rgba(0,0,0,.55);overflow:hidden">
<div class="abs" style="left:0;top:20.5px;width:584px;height:1px;background:#949494;box-shadow:0 1px 0 #fffff8"></div>
<div class="abs" style="left:0;top:70.5px;width:584px;height:1px;background:#949494;box-shadow:0 1px 0 #fffff8"></div>
<svg class="abs" style="left:4px;top:4px" width="12" height="12"><use href="#bulberr"/></svg>
<div class="t" style="left:19.7px;top:1px;font-size:12.5px;letter-spacing:0.247px;">The method openOrCreateDatabase(String, int, null) is undefined for the type Userinfo_Fragment</div>
<div class="t" style="left:4.2px;top:23.5px;font-size:12.5px;letter-spacing:0.224px;">1 quick fix available:</div>
<svg class="abs" style="left:15px;top:55px" width="7" height="7"><use href="#sqred"/></svg>
<div class="t" style="left:31.4px;top:48px;color:#1a72d6;letter-spacing:0.253px;text-decoration:underline;text-underline-offset:0.5px;text-decoration-thickness:1.2px">Create method 'openOrCreateDatabase(String, int, Object)'</div>
<div class="t" style="left:486.7px;top:72px;font-size:11px;letter-spacing:0.292px;color:#6e6e6e">Press 'F2' for focus</div>
</div>
<svg class="abs" style="left:1263.5px;top:13px" width="9" height="8"><use href="#restore"/></svg>
<svg class="abs" style="left:1259.5px;top:31px" width="16" height="16"><use href="#probs"/></svg>
<div class="t" style="left:1263px;top:49.5px;font-size:11px;font-weight:bold;font-style:italic;color:#2467b0;letter-spacing:0;-webkit-text-stroke:0.4px #2467b0">@</div>
<svg class="abs" style="left:1260.5px;top:75px" width="16" height="16"><use href="#decl"/></svg>
<svg class="abs" style="left:1260.5px;top:97px" width="16" height="16"><use href="#cons"/></svg>
<svg class="abs" style="left:1259.5px;top:120px" width="16" height="13"><use href="#andr"/></svg>
<svg class="abs" style="left:1260.5px;top:141px" width="15" height="15"><use href="#tasks"/></svg>
<div class="abs" style="left:543px;top:673px;width:1px;height:19px;background:#a2a2a6"></div><div class="abs" style="left:544px;top:673px;width:1px;height:19px;background:#f6f7fb"></div>
<div class="abs" style="left:647px;top:673px;width:1px;height:19px;background:#a2a2a6"></div><div class="abs" style="left:648px;top:673px;width:1px;height:19px;background:#f6f7fb"></div>
<div class="abs" style="left:745px;top:673px;width:1px;height:19px;background:#a2a2a6"></div><div class="abs" style="left:746px;top:673px;width:1px;height:19px;background:#f6f7fb"></div>
<div class="t" style="left:551.25px;top:672.5px;font-size:12.5px;letter-spacing:0.328px;">Writable</div>
<div class="t" style="left:655.5px;top:672.5px;font-size:12.5px;letter-spacing:0.223px;">Smart Insert</div>
<div class="t" style="left:753.25px;top:672.5px;font-size:12.5px;letter-spacing:-0.005px;">17 : 1</div>
<div class="abs" style="left:840px;top:673px;width:158px;height:21px;background:#e9edf8;box-shadow:inset 0 1px 0 #8a8a8a"></div>
<div class="abs" style="left:840px;top:673px;width:144px;height:21px;background:#eeeeee;box-shadow:inset 1px 1px 0 #868686, inset -1px 0 0 #9a9a9a"></div>
<div class="abs" style="left:841px;top:674px;width:24px;height:20px;background:#ffffe1;box-shadow:1px 0 0 #a8a8a8"></div>
<div class="t" style="left:870.8px;top:673.5px;font-size:12.5px;letter-spacing:0.415px;">120M of 703M</div>
<svg class="abs" style="left:985px;top:676px" width="12" height="15"><use href="#trash"/></svg>
<div class="t" style="left:1001.5px;top:673.5px;font-size:12.5px;letter-spacing:0.241px;">Android SDK Content Loader</div>
<div class="botstrip"></div>
<div class="abs" style="left:13px;top:690.5px;width:28px;height:28px;border-radius:50%;background:#b9c8d8;border:1px solid #2f5f8f;box-sizing:border-box"></div>
</body></html>
